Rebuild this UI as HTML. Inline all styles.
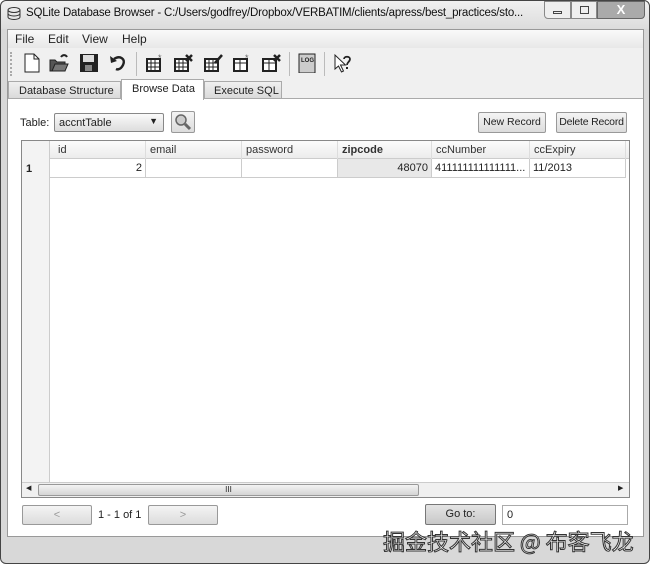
<!DOCTYPE html>
<html><head><meta charset="utf-8"><style>
*{box-sizing:border-box;margin:0;padding:0}
body{width:650px;height:567px;background:#fff;font-family:"Liberation Sans",sans-serif;font-size:11px;color:#222;position:relative;overflow:hidden}
.a{position:absolute}
.btn{position:absolute;border:1px solid #999;border-radius:2px;background:linear-gradient(#f4f4f4,#dcdcdc);text-align:center;font-size:11px;line-height:18px;color:#222;white-space:nowrap}
.ic{position:absolute;top:53px;width:20px;height:20px}
.hd{position:absolute;top:141px;height:18px;line-height:18px;font-size:11px;color:#333;padding-left:8px;border-right:1px solid #ddd}
.cell{position:absolute;top:159px;height:19px;border-right:1px solid #ccc;border-bottom:1px solid #ccc;line-height:19px;font-size:11px;padding:0 3px}
</style></head><body>
<div class="a" style="left:0;top:0;width:650px;height:564px;border:1px solid #444;border-radius:6px;background:#d8d8d8"></div>
<div class="a" style="left:1px;top:1px;width:648px;height:28px;background:linear-gradient(#f0f0f0,#dcdcdc);border-radius:6px 6px 0 0"></div>
<svg class="a" style="left:7px;top:7px" width="14" height="13"><ellipse cx="7" cy="3" rx="6" ry="2.5" fill="none" stroke="#333"/><path d="M1 3v7c0 1.5 3 2.5 6 2.5s6-1 6-2.5V3M1 6.5c0 1.5 3 2.5 6 2.5s6-1 6-2.5" fill="none" stroke="#333"/></svg>
<div class="a" style="left:26px;top:7px;width:510px;font-size:11.5px;color:#111;white-space:nowrap;overflow:hidden;letter-spacing:-0.2px">SQLite Database Browser - C:/Users/godfrey/Dropbox/VERBATIM/clients/apress/best_practices/sto...</div>
<div class="a" style="left:544px;top:1px;width:27px;height:18px;border:1px solid #888;border-radius:0 0 0 4px;background:#eee"><div class="a" style="left:8px;top:9px;width:9px;height:3px;border:1px solid #444"></div></div>
<div class="a" style="left:571px;top:1px;width:26px;height:18px;border:1px solid #888;background:#eee"><div class="a" style="left:8px;top:4px;width:9px;height:8px;border:1px solid #444"></div></div>
<div class="a" style="left:597px;top:1px;width:48px;height:18px;border:1px solid #666;border-radius:0 0 4px 0;background:#aaa;color:#fff;text-align:center;font-weight:bold;font-size:13px;line-height:16px">X</div>
<div class="a" style="left:7px;top:29px;width:637px;height:508px;background:#f0f0f0;border:1px solid #999"></div>
<div class="a" style="left:8px;top:30px;width:635px;height:18px;background:linear-gradient(#fafafa,#e8e8e8)"></div>
<div class="a" style="left:15px;top:32px;font-size:12px">File</div>
<div class="a" style="left:48px;top:32px;font-size:12px">Edit</div>
<div class="a" style="left:82px;top:32px;font-size:12px">View</div>
<div class="a" style="left:122px;top:32px;font-size:12px">Help</div>
<div class="a" style="left:8px;top:48px;width:635px;height:31px;background:#f0f0f0"></div>
<div class="a" style="left:10px;top:52px;height:24px;border-left:2px dotted #aaa"></div>
<svg class="ic" style="left:22px"><path d="M3 1h9l5 5v13H3z" fill="#fff" stroke="#222"/><path d="M12 1v5h5" fill="none" stroke="#222"/></svg>
<svg class="ic" style="left:49px"><path d="M1 18V7h5l2 2h8v9z" fill="#555" stroke="#222"/><path d="M3 18l3-7h13l-3 7z" fill="#777" stroke="#222"/><path d="M12 4c2-3 5-2 6 0" fill="none" stroke="#222" stroke-width="2"/></svg>
<svg class="ic" style="left:79px"><rect x="1" y="1" width="18" height="18" fill="#222"/><rect x="4" y="2" width="11" height="7" fill="#ddd"/><rect x="6" y="12" width="7" height="6" fill="#888"/></svg>
<svg class="ic" style="left:108px"><path d="M6 6c6-4 12 0 9 6s-7 4-7 4" fill="none" stroke="#222" stroke-width="2.5"/><path d="M2 3l1 7 6-2z" fill="#222"/></svg>
<div class="a" style="left:136px;top:52px;height:24px;border-left:1px solid #bbb"></div>
<svg class="ic" style="left:145px"><rect x="2" y="6" width="13" height="12" fill="#fff" stroke="#222" stroke-width="2"/><path d="M2 10h13M2 14h13M6 6v12M10 6v12" stroke="#222"/><text x="13" y="8" font-size="9" fill="#666">*</text></svg>
<svg class="ic" style="left:173px"><rect x="2" y="6" width="13" height="12" fill="#fff" stroke="#222" stroke-width="2"/><path d="M2 10h13M2 14h13M6 6v12M10 6v12" stroke="#222"/><path d="M13 2l6 6M19 2l-6 6" stroke="#222" stroke-width="2.5"/></svg>
<svg class="ic" style="left:203px"><rect x="2" y="6" width="13" height="12" fill="#fff" stroke="#222" stroke-width="2"/><path d="M2 10h13M2 14h13M6 6v12M10 6v12" stroke="#222"/><path d="M12 10l7-8" stroke="#222" stroke-width="2.5"/></svg>
<svg class="ic" style="left:232px"><rect x="2" y="6" width="13" height="12" fill="#fff" stroke="#222" stroke-width="2"/><path d="M2 10h13M8 6v12" stroke="#222"/><text x="13" y="8" font-size="9" fill="#666">*</text></svg>
<svg class="ic" style="left:261px"><rect x="2" y="6" width="13" height="12" fill="#fff" stroke="#222" stroke-width="2"/><path d="M2 10h13M8 6v12" stroke="#222"/><path d="M13 2l6 6M19 2l-6 6" stroke="#222" stroke-width="2.5"/></svg>
<div class="a" style="left:289px;top:52px;height:24px;border-left:1px solid #bbb"></div>
<svg class="ic" style="left:297px"><rect x="2" y="1" width="16" height="19" fill="#ccc" stroke="#222"/><text x="4" y="9" font-size="6" font-weight="bold" fill="#222">LOG</text></svg>
<div class="a" style="left:324px;top:52px;height:24px;border-left:1px solid #bbb"></div>
<svg class="ic" style="left:333px"><path d="M2 2v14l3.5-3 3 6 2-1-3-6h5z" fill="#fff" stroke="#222"/><path d="M11 6c0-3 6-3 6 0s-3 3-3 6" fill="none" stroke="#222" stroke-width="1.8"/><rect x="13" y="14" width="2" height="2" fill="#222"/></svg>
<div class="a" style="left:8px;top:81px;width:113px;height:18px;border:1px solid #aaa;background:linear-gradient(#f0f0f0,#dadada);font-size:11px;padding:3px 0 0 10px">Database Structure</div>
<div class="a" style="left:121px;top:79px;width:83px;height:21px;border:1px solid #aaa;border-bottom:none;background:#fff;font-size:11px;padding:3px 0 0 10px;z-index:2">Browse Data</div>
<div class="a" style="left:204px;top:81px;width:78px;height:18px;border:1px solid #aaa;background:linear-gradient(#f0f0f0,#dadada);font-size:11px;padding:3px 0 0 9px">Execute SQL</div>
<div class="a" style="left:8px;top:98px;width:635px;height:438px;border-top:1px solid #aaa;background:#fff"></div>
<div class="a" style="left:20px;top:117px">Table:</div>
<div class="a" style="left:54px;top:113px;width:110px;height:19px;border:1px solid #888;border-radius:2px;background:linear-gradient(#fafafa,#ddd);padding:3px 4px">accntTable<span style="position:absolute;right:5px;top:2px;font-size:9px">▼</span></div>
<div class="btn" style="left:171px;top:111px;width:24px;height:22px"><svg width="18" height="18" style="margin-top:1px"><circle cx="7" cy="7" r="5" fill="#ccc" stroke="#666" stroke-width="1.5"/><path d="M11 11l5 5" stroke="#666" stroke-width="3"/></svg></div>
<div class="btn" style="left:478px;top:112px;width:68px;height:21px;font-size:10.5px">New Record</div>
<div class="btn" style="left:556px;top:112px;width:71px;height:21px;font-size:10.5px;letter-spacing:-0.2px">Delete Record</div>
<div class="a" style="left:21px;top:140px;width:609px;height:358px;border:1px solid #888;background:#fff"></div>
<div class="a" style="left:22px;top:141px;width:607px;height:18px;background:linear-gradient(#fbfbfb,#ececec);border-bottom:1px solid #ccc"></div>
<div class="a" style="left:22px;top:141px;width:28px;height:342px;background:#f3f3f3;border-right:1px solid #ccc"></div>
<div class="hd" style="left:50px;width:96px">id</div>
<div class="hd" style="left:146px;width:96px;padding-left:4px">email</div>
<div class="hd" style="left:242px;width:96px;padding-left:4px">password</div>
<div class="hd" style="left:338px;width:94px;padding-left:4px;font-weight:bold">zipcode</div>
<div class="hd" style="left:432px;width:98px;padding-left:4px">ccNumber</div>
<div class="hd" style="left:530px;width:96px;padding-left:4px">ccExpiry</div>
<div class="a" style="left:26px;top:163px;font-weight:bold">1</div>
<div class="cell" style="left:50px;width:96px;text-align:right">2</div>
<div class="cell" style="left:146px;width:96px"></div>
<div class="cell" style="left:242px;width:96px"></div>
<div class="cell" style="left:338px;width:94px;text-align:right;background:#e8e8e8">48070</div>
<div class="cell" style="left:432px;width:98px;overflow:hidden;white-space:nowrap">411111111111111...</div>
<div class="cell" style="left:530px;width:96px">11/2013</div>
<div class="a" style="left:22px;top:482px;width:607px;height:15px;background:#f0f0f0;border-top:1px solid #ccc"></div>
<div class="a" style="left:26px;top:484px;font-size:7px">◀</div>
<div class="a" style="left:618px;top:484px;font-size:7px">▶</div>
<div class="a" style="left:38px;top:484px;width:381px;height:12px;border:1px solid #999;border-radius:2px;background:linear-gradient(#f4f4f4,#d4d4d4);text-align:center;font-size:8px;line-height:10px">III</div>
<div class="btn" style="left:22px;top:505px;width:70px;height:20px;color:#999">&lt;</div>
<div class="a" style="left:98px;top:509px">1 - 1 of 1</div>
<div class="btn" style="left:148px;top:505px;width:70px;height:20px;color:#999">&gt;</div>
<div class="btn" style="left:425px;top:504px;width:71px;height:21px;border-color:#777;background:linear-gradient(#e4e4e4,#c8c8c8)">Go to:</div>
<div class="a" style="left:502px;top:505px;width:126px;height:20px;border:1px solid #aaa;padding:3px 4px">0</div>
<div class="a" style="left:383px;top:525px;font-family:'Noto Sans CJK SC',sans-serif;font-size:22px;color:#fff;-webkit-text-stroke:1px #333;letter-spacing:0px">掘金技术社区 @ 布客飞龙</div>
</body></html>
